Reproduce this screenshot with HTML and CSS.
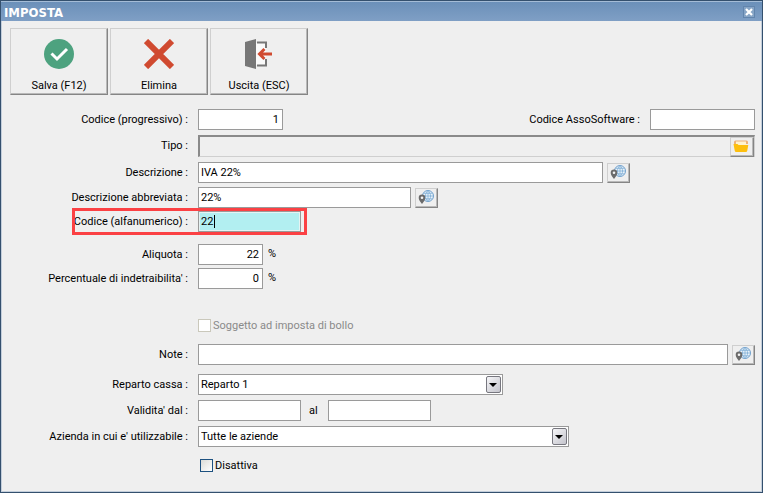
FILE: index.html
```html
<!DOCTYPE html>
<html lang="it">
<head>
  <meta charset="UTF-8">
  <meta name="viewport" content="width=device-width, initial-scale=1.0">
  <title>Imposta</title>
  <link rel="stylesheet" href="styles.css">
</head>
<body>

  <!-- Shared icons -->
  <svg class="sprite" aria-hidden="true">
    <symbol id="icon-globe" viewBox="0 0 16 14">
      <circle cx="10" cy="6" r="5.5" fill="#eaf3fa" stroke="#6f9fcc"/>
      <path d="M10 .5v11M4.500 6h11M5.500 3.300h9M5.500 8.800h9M10 .5c-3.400 3-3.400 8 0 11M10 .5c3.400 3 3.400 8 0 11" fill="none" stroke="#7fadd6" stroke-width=".8"/>
      <path d="M4 14C2.500 11.500.7 10 .7 7.900a3.300 3.300 0 0 1 6.600 0C7.300 10 5.500 11.500 4 14z" fill="#6b6b6b"/>
      <circle cx="4" cy="7.800" r="1.300" fill="#f4f4f4"/>
    </symbol>
  </svg>

  <main class="window">
    <header class="titlebar">
      <h1>IMPOSTA</h1>
      <button class="close" type="button" aria-label="Chiudi">
        <svg width="8" height="8" viewBox="0 0 8 8"><path d="M1 1l6 6M7 1L1 7" stroke="#fff" stroke-width="2.200"/></svg>
      </button>
    </header>

    <div class="toolbar">
      <button class="tool" type="button">
        <svg width="30" height="30" viewBox="0 0 30 30">
          <circle cx="15" cy="15" r="15" fill="#4da27f"/>
          <path d="M7.500 14.500l5.500 5.500 10-10" fill="none" stroke="#fff" stroke-width="3"/>
        </svg>
        Salva (F12)
      </button>
      <button class="tool" type="button">
        <svg width="30" height="30" viewBox="0 0 30 30">
          <path d="M2 2l26 26M28 2L2 28" stroke="#d04a30" stroke-width="6"/>
        </svg>
        Elimina
      </button>
      <button class="tool" type="button">
        <svg width="30" height="30" viewBox="0 0 30 30">
          <path d="M12 4h10v22H12z" fill="#fafafa"/>
          <path d="M1 3L12 0v30L1 27z" fill="#777"/>
          <path d="M13 3.500h9V9M13 26.500h9V20" fill="none" stroke="#777" stroke-width="2"/>
          <path d="M28 15H16M20.500 10L15.500 15l5 5" fill="none" stroke="#d04a30" stroke-width="3"/>
        </svg>
        Uscita (ESC)
      </button>
    </div>

    <form class="form">
      <div class="group">
        <div class="row">
          <label class="label" for="codice">Codice (progressivo) :</label>
          <input class="field w-code number" id="codice" type="text" value="1">
          <label class="label-right" for="asso">Codice AssoSoftware :</label>
          <input class="field w-asso" id="asso" type="text">
        </div>
        <div class="row">
          <label class="label" for="tipo">Tipo :</label>
          <div class="lookup">
            <input id="tipo" type="text" readonly>
            <button class="mini" type="button" aria-label="Scegli tipo">
              <svg width="16" height="12" viewBox="0 0 16 12">
                <path d="M1 4V2Q1 .5 2.500.5h11Q15 .5 15 2v2z" fill="#eeb27a"/>
                <path d="M3 1.500h10V5H3z" fill="#fff3d0"/>
                <path d="M.5 4h4l1 1h9.800l-1 5.500q-.2 1.500-1.500 1.500H3.200q-1.300 0-1.500-1.500z" fill="#fdbf0f"/>
              </svg>
            </button>
          </div>
        </div>
        <div class="row">
          <label class="label" for="descrizione">Descrizione :</label>
          <input class="field w-desc" id="descrizione" type="text" value="IVA 22%">
          <button class="mini" type="button" aria-label="Traduci descrizione"><svg width="16" height="14"><use href="#icon-globe"/></svg></button>
        </div>
      </div>

      <div class="group tight after-small">
        <div class="row">
          <label class="label" for="abbreviata">Descrizione abbreviata :</label>
          <input class="field w-short" id="abbreviata" type="text" value="22%">
          <button class="mini" type="button" aria-label="Traduci descrizione abbreviata"><svg width="16" height="14"><use href="#icon-globe"/></svg></button>
        </div>
        <div class="row highlight">
          <label class="label" for="alfanumerico">Codice (alfanumerico) :</label>
          <input class="field w-date active" id="alfanumerico" type="text" value="22">
        </div>
      </div>

      <div class="group tight after-medium">
        <div class="row">
          <label class="label" for="aliquota">Aliquota :</label>
          <input class="field w-rate number" id="aliquota" type="text" value="22">
          <span class="unit">%</span>
        </div>
        <div class="row">
          <label class="label" for="indetraibilita">Percentuale di indetraibilita' :</label>
          <input class="field w-rate number" id="indetraibilita" type="text" value="0">
          <span class="unit">%</span>
        </div>
      </div>

      <div class="group after-large">
        <label class="check disabled"><input type="checkbox" disabled>Soggetto ad imposta di bollo</label>
      </div>

      <div class="group after-medium">
        <div class="row">
          <label class="label" for="note">Note :</label>
          <input class="field w-full" id="note" type="text">
          <button class="mini" type="button" aria-label="Traduci note"><svg width="16" height="14"><use href="#icon-globe"/></svg></button>
        </div>
      </div>

      <div class="group after-row">
        <div class="row">
          <label class="label" for="reparto">Reparto cassa :</label>
          <span class="select w-reparto">
            <select id="reparto"><option>Reparto 1</option></select>
          </span>
        </div>
        <div class="row">
          <label class="label" for="dal">Validita' dal :</label>
          <input class="field w-date" id="dal" type="text">
          <label class="between" for="al">al</label>
          <input class="field w-date" id="al" type="text">
        </div>
        <div class="row">
          <label class="label" for="azienda">Azienda in cui e' utilizzabile :</label>
          <span class="select w-azienda">
            <select id="azienda"><option>Tutte le aziende</option></select>
          </span>
        </div>
      </div>

      <div class="group after-medium">
        <label class="check"><input type="checkbox">Disattiva</label>
      </div>
    </form>
  </main>

</body>
</html>
```
FILE: styles.css
```css
*, *::before, *::after {
  box-sizing: border-box;
}
body {
  margin: 0;
  background-color: #efefef;
  color: #000;
}
body, button, input, select {
  font-family: Tahoma, Roboto, "DejaVu Sans Condensed", sans-serif;
  font-size: 11px;
  line-height: 13px;
}
.sprite {
  display: none;
}

/* Window frame */
.window {
  min-height: 100vh;
  border: 1px solid #34506e;
  box-shadow: inset 0 0 0 1px #c3cedb;
}
.titlebar {
  display: flex;
  align-items: center;
  justify-content: space-between;
  height: 20px;
  padding: 4px 7px 2px 3px;
  border-top: 1px solid #a4bcd6;
  background: linear-gradient(#6b90b9, #7f9fc5);
}
.titlebar h1 {
  margin: 0;
  font-family: Tahoma, "DejaVu Sans Condensed", sans-serif;
  font-size: 13px;
  font-weight: bold;
  color: #fff;
}
.close {
  display: flex;
  align-items: center;
  justify-content: center;
  width: 12px;
  height: 12px;
  margin-bottom: 2px;
  padding: 0;
  border: 1px solid #6285ad;
  background-color: #87a5c6;
}

/* Toolbar */
.toolbar {
  display: flex;
  gap: 2px;
  padding: 7px 9px 0;
}
.tool {
  display: flex;
  flex-direction: column;
  align-items: center;
  justify-content: space-between;
  width: 98px;
  height: 67px;
  padding: 10px 0 2px;
  color: #000;
}
.tool, .mini {
  border: 1px solid #cfcfcf;
  border-right-color: #858585;
  border-bottom-color: #858585;
  background-color: #efefef;
  box-shadow: inset -1px -1px 0 #b9b9b9;
}

/* Form rows */
.form {
  padding: 14px 7px 12px 0;
}
.group {
  display: flex;
  flex-direction: column;
  gap: 5px;
}
.tight {
  gap: 3px;
}
.after-small {
  margin-top: 4px;
}
.after-row {
  margin-top: 9px;
}
.after-medium {
  margin-top: 12px;
}
.after-large {
  margin-top: 30px;
}
.row {
  display: flex;
  align-items: center;
  position: relative;
}
.label {
  flex: none;
  width: 187px;
  margin-right: 10px;
  padding-bottom: 1px;
  text-align: right;
}
.label-right {
  margin-left: auto;
  margin-right: 10px;
  padding-bottom: 1px;
}
.field {
  height: 21px;
  padding: 0 3px 0 2px;
  border: 1px solid #9a9a9a;
  background-color: #fff;
  color: #000;
  outline: none;
}
.number {
  text-align: right;
}
.w-code { width: 85px; }
.w-asso { width: 105px; }
.w-desc { width: 405px; }
.w-short { width: 213px; }
.w-date { width: 103px; }
.w-rate { width: 65px; }
.w-full { flex: 1; }
.w-reparto { width: 305px; }
.w-azienda { width: 371px; }

/* Current field, with a steady text cursor */
.active {
  background: linear-gradient(#000, #000) 15px 3px / 1px 13px no-repeat #b2eff1;
  box-shadow: inset 0 0 0 1px #e6f3f3;
}
/* Marks the field being described */
.highlight::after {
  content: "";
  position: absolute;
  top: -3px;
  bottom: -3px;
  left: 71px;
  width: 235px;
  border: 3px solid #fb4144;
  pointer-events: none;
}

.mini {
  display: flex;
  flex: none;
  align-items: center;
  justify-content: center;
  width: 23px;
  height: 20px;
  margin-left: 4px;
  padding: 0 2px 2px 0;
}
.lookup {
  display: flex;
  flex: 1;
  height: 22px;
  border: 1px solid #cfcfcf;
  border-top: 2px solid #8a8a8a;
  border-left: 2px solid #8a8a8a;
}
.lookup input {
  flex: 1;
  min-width: 0;
  border: 0;
  background: none;
  outline: none;
}
.lookup .mini {
  width: 24px;
  margin: 0;
}
.unit {
  margin-left: 5px;
  padding-bottom: 2px;
}
.between {
  width: 27px;
  padding-left: 8px;
}

/* Drop-downs */
.select {
  position: relative;
  height: 21px;
  border: 1px solid #9a9a9a;
  background-color: #fff;
}
.select select {
  width: 100%;
  height: 100%;
  padding: 0 20px 0 2px;
  border: 0;
  background: none;
  color: #000;
  appearance: none;
  outline: none;
}
.select::before {
  content: "";
  position: absolute;
  top: 1px;
  right: 1px;
  width: 15px;
  height: 17px;
  border: 1px solid #77777f;
  border-radius: 2px;
  background: linear-gradient(135deg, #f6f6f8, #c4c4cc);
  pointer-events: none;
}
.select::after {
  content: "";
  position: absolute;
  top: 8px;
  right: 5px;
  border: 4px solid transparent;
  border-top-color: #000;
  border-bottom: 0;
  pointer-events: none;
}

/* Tick boxes */
.check {
  display: flex;
  align-items: center;
  gap: 2px;
  align-self: flex-start;
  margin-left: 199px;
}
.check input {
  width: 13px;
  height: 13px;
  margin: 0;
  border: 1px solid #1d5180;
  background: linear-gradient(135deg, #dcdcd7, #fff);
  appearance: none;
}
.disabled {
  margin-left: 197px;
  color: #8a8a8a;
}
.disabled input {
  border-color: #cac8bb;
  background: #fff;
}
```
